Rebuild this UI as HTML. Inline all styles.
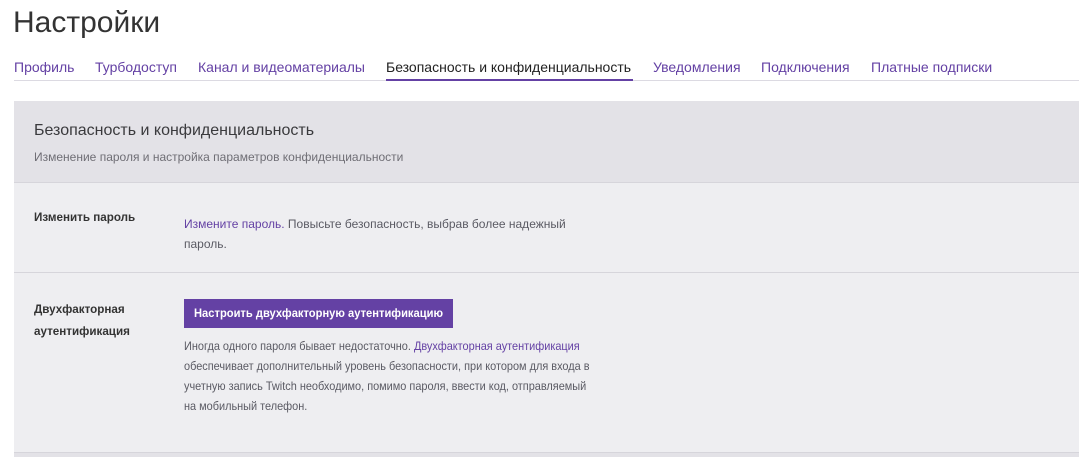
<!DOCTYPE html>
<html><head><meta charset="utf-8"><style>
body{margin:0;width:1084px;height:457px;background:#fff;font-family:"Liberation Sans",sans-serif;position:relative;overflow:hidden}
.a{position:absolute;white-space:nowrap}
.tab{top:58px;font-size:14px;color:#6441a4;line-height:18px}
.p{color:#6441a4}
.small{font-size:12px;line-height:20px;color:#5a5a63;transform:scaleX(0.91);transform-origin:0 0}
</style></head><body>
<div class="a" style="left:13px;top:4px;font-size:30px;color:#333;line-height:38px">Настройки</div>
<div class="a tab" style="left:14px">Профиль</div>
<div class="a tab" style="left:95px">Турбодоступ</div>
<div class="a tab" style="left:198px">Канал и видеоматериалы</div>
<div class="a tab" style="left:386px;color:#222">Безопасность и конфиденциальность</div>
<div class="a tab" style="left:653px">Уведомления</div>
<div class="a tab" style="left:761px">Подключения</div>
<div class="a tab" style="left:871px">Платные подписки</div>
<div class="a" style="left:14px;top:80px;width:1065px;height:1px;background:#dcdae2"></div>
<div class="a" style="left:386px;top:79px;width:247px;height:2px;background:#6441a4"></div>

<div class="a" style="left:14px;top:101px;width:1065px;height:81px;background:#e3e2e7"></div>
<div class="a" style="left:34px;top:122px;font-size:16px;color:#3a3a3d">Безопасность и конфиденциальность</div>
<div class="a" style="left:34px;top:150px;font-size:12px;color:#6f6e75">Изменение пароля и настройка параметров конфиденциальности</div>
<div class="a" style="left:14px;top:182px;width:1065px;height:1px;background:#d6d5db"></div>
<div class="a" style="left:14px;top:183px;width:1065px;height:274px;background:#eeeef1"></div>
<div class="a" style="left:34px;top:210px;font-size:12px;font-weight:bold;color:#333;transform:scaleX(0.97);transform-origin:0 0">Изменить пароль</div>
<div class="a small" style="left:184px;top:214px;transform:none">
<span class="p">Измените пароль.</span> Повысьте безопасность, выбрав более надежный<br>пароль.</div>
<div class="a" style="left:14px;top:272px;width:1065px;height:1px;background:#d6d5db"></div>
<div class="a" style="left:34px;top:298px;font-size:12px;font-weight:bold;color:#333;line-height:22px;transform:scaleX(0.97);transform-origin:0 0">Двухфакторная<br>аутентификация</div>
<div class="a" style="left:184px;top:299px;width:269px;height:29px;background:#6441a4"></div>
<div class="a" style="left:194px;top:299px;color:#fff;font-size:12px;font-weight:bold;line-height:29px;transform:scaleX(0.93);transform-origin:0 0">Настроить двухфакторную аутентификацию</div>
<div class="a small" style="left:184px;top:336px">Иногда одного пароля бывает недостаточно. <span class="p">Двухфакторная аутентификация</span><br>обеспечивает дополнительный уровень безопасности, при котором для входа в<br>учетную запись Twitch необходимо, помимо пароля, ввести код, отправляемый<br>на мобильный телефон.</div>
<div class="a" style="left:14px;top:452px;width:1065px;height:1px;background:#d6d5db"></div>
<div class="a" style="left:14px;top:453px;width:1065px;height:4px;background:#e3e2e7"></div>
</body></html>
